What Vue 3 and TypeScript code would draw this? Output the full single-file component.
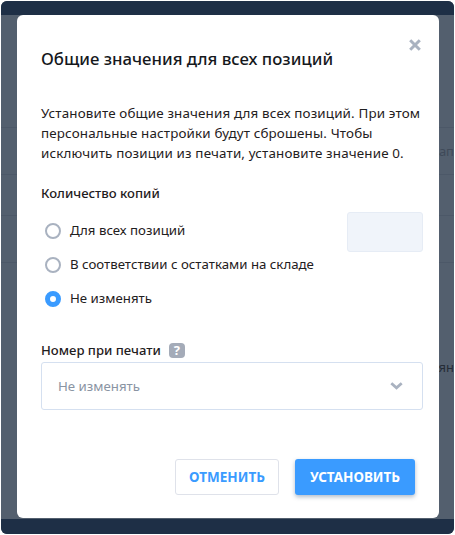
<script setup lang="ts">
const options = [
  { label: 'Для всех позиций', checked: false },
  { label: 'В соответствии с остатками на складе', checked: false },
  { label: 'Не изменять', checked: true },
]
</script>

<template>
  <div class="window">
    <div class="topbar"></div>
    <div class="page">
      <div class="row row-a"><span>нап</span></div>
      <div class="row row-b"></div>
      <div class="row row-c"></div>
      <div class="row row-d"></div>
      <div class="row row-e"><span>ян</span></div>
    </div>
    <div class="bottombar"></div>
    <section class="modal">
      <svg class="close" width="12" height="12" viewBox="0 0 12 12">
        <path d="M1.2 1.2l9.6 9.6M10.8 1.2l-9.6 9.6" fill="none" stroke="#a9b2c0" stroke-width="3" />
      </svg>
      <h2 class="title">Общие значения для всех позиций</h2>
      <p class="intro">Установите общие значения для всех позиций. При этом персональные настройки будут сброшены. Чтобы исключить позиции из печати, установите значение 0.</p>
      <h3 class="label first">Количество копий</h3>
      <div class="copies">
        <div class="options">
          <div v-for="o in options" :key="o.label" class="option">
            <span class="radio" :class="{ checked: o.checked }"></span>
            <span class="option-text">{{ o.label }}</span>
          </div>
        </div>
        <div class="qty"></div>
      </div>
      <div class="number-label">
        <h3 class="label">Номер при печати</h3>
        <span class="help">?</span>
      </div>
      <div class="select">
        <span>Не изменять</span>
        <svg width="13" height="8" viewBox="0 0 13 8">
          <path d="M1.3 1.3l5.2 4.6 5.2-4.6" fill="none" stroke="#a9b2c0" stroke-width="2.8" />
        </svg>
      </div>
      <div class="actions">
        <button class="btn cancel">ОТМЕНИТЬ</button>
        <button class="btn apply">УСТАНОВИТЬ</button>
      </div>
    </section>
  </div>
</template>

<style>
html, body { margin: 0; background: #fff; }
</style>

<style scoped>
.window {
  position: relative;
  margin: 1px;
  width: 453px;
  height: 533px;
  border-radius: 6px;
  overflow: hidden;
  display: flex;
  flex-direction: column;
  background: #535f6e;
  font-family: "Noto Sans", sans-serif;
  color: #1f2021;
}
.topbar { height: 14px; background: #1e2f46; flex: none; }
.bottombar { height: 15px; background: #1e2f46; flex: none; }
.page { flex: 1; display: flex; flex-direction: column; padding-top: 112px; }
.row { border-top: 1px solid #4c5868; font-size: 13px; text-align: right; overflow: hidden; white-space: nowrap; box-sizing: border-box; }
.row-a { height: 47px; line-height: 47px; color: #3f4a59; }
.row-b { height: 41px; }
.row-c { height: 47px; }
.row-d { height: 82px; }
.row-e { height: 44px; line-height: 44px; color: #252c36; border-top-color: #535f6e; }
.modal {
  position: absolute;
  left: 16px;
  top: 14px;
  width: 422px;
  height: 503px;
  box-sizing: border-box;
  padding: 34px 16px 0 24px;
  background: #fff;
  border-radius: 6px;
  display: flex;
  flex-direction: column;
}
.close { position: absolute; right: 18px; top: 24px; }
.title { margin: 0; font-size: 16.75px; line-height: 20px; font-weight: 500; color: #15181c; }
.intro { margin: 34px 0 0; font-size: 13.4px; letter-spacing: 0.15px; line-height: 20px; }
.label { margin: 0; font-size: 13.1px; line-height: 18px; font-weight: 500; }
.label.first { margin-top: 21px; }
.copies { display: flex; justify-content: space-between; margin-top: 10px; }
.options { display: flex; flex-direction: column; padding-top: 9px; padding-left: 4px; gap: 15px; }
.option { display: flex; align-items: center; gap: 9px; font-size: 13.25px; line-height: 20px; height: 19px; }
.option-text { padding-bottom: 2px; }
.radio { width: 16px; height: 16px; box-sizing: border-box; border: 2px solid #a9b2c0; border-radius: 50%; }
.radio.checked { border: 5px solid #3a9bff; background: #fff; }
.qty { width: 76px; height: 40px; box-sizing: border-box; background: #f0f4fa; border: 1px solid #e6ecf5; border-radius: 3px; }
.number-label { display: flex; align-items: center; gap: 8px; margin-top: 33px; }
.help { width: 16px; height: 15px; border-radius: 4px; background: #a4abb8; color: #fff; font-size: 13px; font-weight: 700; line-height: 15px; text-align: center; }
.select {
  margin-top: 3px;
  height: 48px;
  box-sizing: border-box;
  border: 1px solid #d5e0f0;
  border-radius: 3px;
  padding: 0 19px 0 16px;
  display: flex;
  align-items: center;
  justify-content: space-between;
  font-size: 13.25px;
  color: #8a94a3;
}
.actions { display: flex; justify-content: flex-end; gap: 16px; margin-top: 49px; padding-right: 8px; }
.btn { height: 36px; border-radius: 3px; font-family: inherit; font-size: 13.5px; font-weight: 700; padding: 0; }
.cancel { width: 104px; background: #fff; border: 1px solid #dfe2ea; color: #3a9bff; }
.apply { width: 120px; background: #3a9bff; border: none; color: #fff; box-shadow: 0 2px 4px rgba(30, 60, 100, .35); }
</style>
